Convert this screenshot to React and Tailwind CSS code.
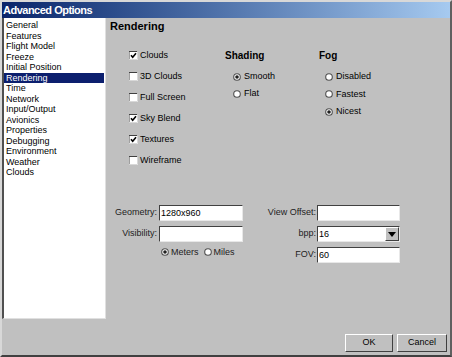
import React from "react";

const font = { fontFamily: '"Liberation Sans", Arial, sans-serif' };

const items = [
  "General",
  "Features",
  "Flight Model",
  "Freeze",
  "Initial Position",
  "Rendering",
  "Time",
  "Network",
  "Input/Output",
  "Avionics",
  "Properties",
  "Debugging",
  "Environment",
  "Weather",
  "Clouds",
];

const Check = ({ on }) => (
  <svg width="9" height="9" viewBox="0 0 9 9" className="shrink-0">
    <rect x="0" y="0" width="9" height="9" fill="#fff" />
    <path d="M0 8.5V0.5H8.5" stroke="#404040" fill="none" />
    <path d="M0.5 8.5H8.5V0.5" stroke="#d8d8d8" fill="none" />
    {on && <path d="M2 4.2L3.7 6.2L7 2.2" stroke="#000" strokeWidth="1.6" fill="none" />}
  </svg>
);

const Radio = ({ on }) => (
  <svg width="8" height="8" viewBox="0 0 8 8" className="shrink-0">
    <circle cx="4" cy="4" r="3.3" fill="#fff" stroke="#505050" strokeWidth="1.1" />
    {on && <circle cx="4" cy="4" r="1.8" fill="#202020" />}
  </svg>
);

const Field = ({ value, children }) => (
  <div className="relative h-[16px] bg-white border-t border-l border-t-[#404040] border-l-[#404040] border-b border-r border-b-[#e8e8e8] border-r-[#e8e8e8] pl-[1px] text-[9px] leading-[14px] text-black">
    {value}
    {children}
  </div>
);

export default function App() {
  return (
    <div
      className="w-[452px] h-[357px] bg-[#c0c0c0] flex flex-col border-2 border-t-[#d8d8d8] border-l-[#d8d8d8] border-r-[#606060] border-b-[#404040] text-black"
      style={font}
    >
      {/* title */}
      <div className="h-[16px] shrink-0 bg-linear-to-r from-[#0a246a] to-[#a6caf0] text-white font-bold text-[11px] leading-[16px] pl-[1px] tracking-[-0.5px]">
        Advanced Options
      </div>

      <div className="flex h-[301px] shrink-0">
        {/* list */}
        <div className="w-[104px] bg-white border-l-2 border-l-[#505050] border-r border-r-[#e0e0e0] border-b border-b-[#e0e0e0] pt-[2px] pr-[1px]">
          {items.map((it) => (
            <div
              key={it}
              className={
                "h-[10.5px] text-[9px] leading-[10.5px] pl-[2px] " +
                (it === "Rendering" ? "bg-[#0c1f6e] text-white" : "text-black")
              }
            >
              {it}
            </div>
          ))}
        </div>

        {/* panel */}
        <div className="flex-1 pl-[4px]">
          <div className="text-[11px] leading-[13px] font-bold pt-[2px]">Rendering</div>

          <div className="flex mt-[12px] pl-[19px]">
            <div className="w-[96px]">
              {[
                ["Clouds", true],
                ["3D Clouds", false],
                ["Full Screen", false],
                ["Sky Blend", true],
                ["Textures", true],
                ["Wireframe", false],
              ].map(([l, on]) => (
                <div key={l} className="h-[21px] flex items-center gap-[2px] text-[9px]">
                  <Check on={on} />
                  <span>{l}</span>
                </div>
              ))}
            </div>
            <div className="w-[94px]">
              <div className="h-[21px] flex items-center font-bold text-[10px]">Shading</div>
              <div className="mt-[2px] pl-[8px]">
                {[
                  ["Smooth", true],
                  ["Flat", false],
                ].map(([l, on]) => (
                  <div key={l} className="h-[17px] flex items-center gap-[3px] text-[9px]">
                    <Radio on={on} />
                    <span>{l}</span>
                  </div>
                ))}
              </div>
            </div>
            <div>
              <div className="h-[21px] flex items-center font-bold text-[10px]">Fog</div>
              <div className="mt-[2px] pl-[6px]">
                {[
                  ["Disabled", false],
                  ["Fastest", false],
                  ["Nicest", true],
                ].map(([l, on]) => (
                  <div key={l} className="h-[17.5px] flex items-center gap-[3px] text-[9px]">
                    <Radio on={on} />
                    <span>{l}</span>
                  </div>
                ))}
              </div>
            </div>
          </div>

          {/* fields */}
          <div className="grid grid-cols-[49px_84px_74px_83px] gap-y-[5px] mt-[34px] text-[9px] text-[#222]">
            <div className="h-[16px] flex items-center justify-end pr-[2px]">Geometry:</div>
            <Field value="1280x960" />
            <div className="h-[16px] flex items-center justify-end pr-[1px]">View Offset:</div>
            <Field value="" />

            <div className="h-[16px] flex items-center justify-end pr-[2px]">Visibility:</div>
            <Field value="" />
            <div className="h-[16px] flex items-center justify-end pr-[1px]">bpp:</div>
            <Field value="16">
              <div className="absolute right-0 top-0 w-[14px] h-[14px] bg-[#c0c0c0] border border-t-white border-l-white border-b-[#404040] border-r-[#404040] flex items-center justify-center">
                <svg width="8" height="5" viewBox="0 0 8 5">
                  <path d="M0 0H8L4 5Z" fill="#000" />
                </svg>
              </div>
            </Field>

            <div />
            <div className="h-[16px] flex items-start pt-[1px] pl-[2px] gap-[2px]">
              <Radio on />
              <span className="leading-[9px] mr-[3px]">Meters</span>
              <Radio on={false} />
              <span className="leading-[9px]">Miles</span>
            </div>
            <div className="h-[16px] flex items-center justify-end pr-[1px]">FOV:</div>
            <Field value="60" />
          </div>
        </div>
      </div>

      {/* footer */}
      <div className="flex justify-end gap-[4px] pr-[3px] pt-[15px] text-[9px]">
        <button className="w-[48px] h-[18px] bg-[#c0c0c0] border border-t-white border-l-white border-b-[#404040] border-r-[#404040]">
          OK
        </button>
        <button className="w-[50px] h-[18px] bg-[#c0c0c0] border border-t-white border-l-white border-b-[#404040] border-r-[#404040]">
          Cancel
        </button>
      </div>
    </div>
  );
}
